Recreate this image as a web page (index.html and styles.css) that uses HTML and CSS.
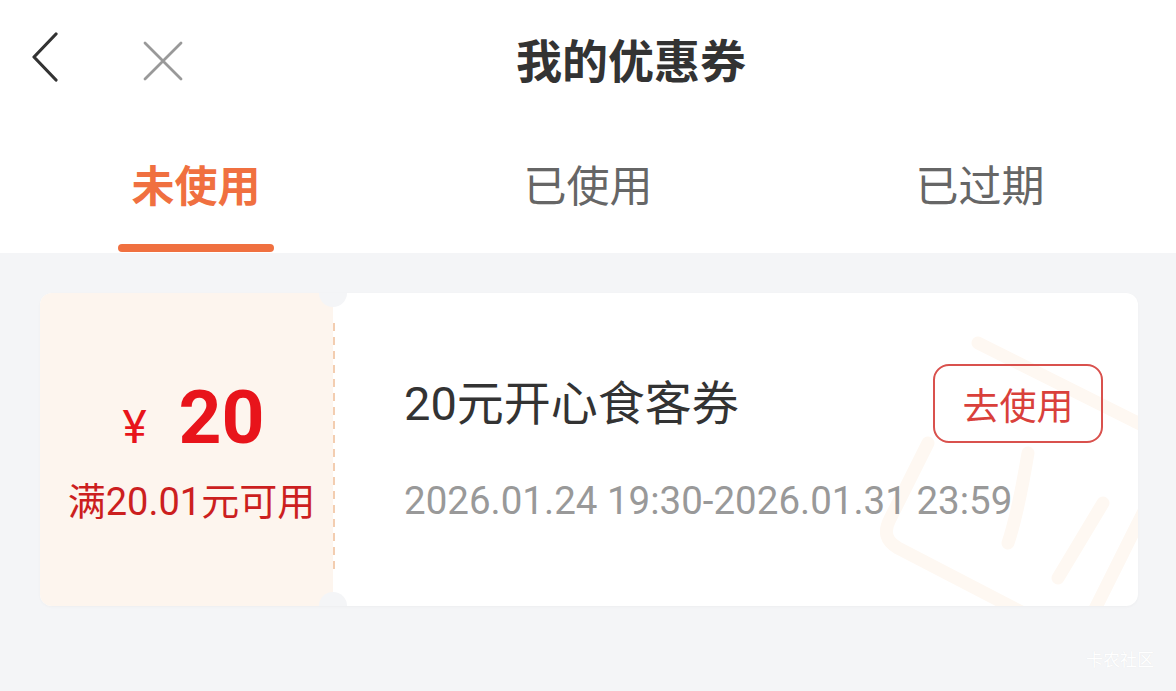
FILE: index.html
```html
<!doctype html>
<html lang="zh-CN">
<head>
<meta charset="utf-8">
<title>我的优惠券</title>
<link rel="stylesheet" href="styles.css">
</head>
<body>

<div class="topbar">
  <div class="topbar-left">
    <svg class="icon-back" width="40" height="60" viewBox="0 0 40 60">
      <path d="M24 3 L2 26 L24 49" fill="none" stroke="#333" stroke-width="3.2" stroke-linecap="round" stroke-linejoin="round"/>
    </svg>
    <svg class="icon-close" width="42" height="42" viewBox="0 0 42 42">
      <path d="M3 3 L39 39 M39 3 L3 39" fill="none" stroke="#999" stroke-width="2.8" stroke-linecap="round"/>
    </svg>
  </div>
  <div class="topbar-title">我的优惠券</div>
  <div></div>
</div>

<div class="tabs">
  <div class="tab active"><span class="tab-label">未使用</span><i class="tab-line"></i></div>
  <div class="tab"><span class="tab-label">已使用</span><i class="tab-line"></i></div>
  <div class="tab"><span class="tab-label">已过期</span><i class="tab-line"></i></div>
</div>

<div class="list">
  <div class="coupon">
    <div class="coupon-value">
      <div class="amount"><span class="yen">¥</span><span class="num">20</span></div>
      <div class="cond">满20.01元可用</div>
    </div>
    <div class="coupon-info">
      <svg class="stamp" width="300" height="320" viewBox="0 0 300 320">
        <g fill="none" stroke="#fef8f2" stroke-width="13" stroke-linecap="round" stroke-linejoin="round">
          <path d="M110 20 L290 110 Q310 120 300 140 L220 300 Q210 318 190 308 L30 225 Q12 215 22 196 L60 120"/>
          <path d="M160 130 Q150 190 140 220"/>
          <path d="M235 180 L190 255"/>
        </g>
      </svg>
      <div class="info-row">
        <div class="coupon-name">20元开心食客券</div>
        <button class="use-btn">去使用</button>
      </div>
      <div class="coupon-date">2026.01.24 19:30-2026.01.31 23:59</div>
    </div>
  </div>
</div>

<div class="watermark">卡农社区</div>

</body>
</html>
```

FILE: styles.css
```css
html, body {
  margin: 0;
  padding: 0;
}

body {
  width: 1176px;
  height: 691px;
  overflow: hidden;
  background-color: #f4f5f7;
  font-family: Roboto, "Noto Sans CJK SC", sans-serif;
  color: #333;
  position: relative;
}

/* top bar */
.topbar {
  height: 120px;
  background: #fff;
  display: grid;
  grid-template-columns: 1fr auto 1fr;
  align-items: center;
}
.topbar-left {
  display: flex;
  align-items: center;
  padding-left: 32px;
  padding-top: 2px;
}
.icon-back {
  display: block;
}
.icon-close {
  display: block;
  margin-left: 70px;
}
.topbar-title {
  font-family: "Noto Sans CJK SC", sans-serif;
  font-size: 46px;
  font-weight: 700;
  color: #333;
  line-height: 60px;
  padding-left: 86px;
  margin-top: -5px;
}

/* tabs */
.tabs {
  height: 133px;
  background: #fff;
  display: flex;
}
.tab {
  flex: 1;
  display: flex;
  flex-direction: column;
  align-items: center;
  padding-top: 33px;
  box-sizing: border-box;
}
.tab-label {
  font-family: "Noto Sans CJK SC", sans-serif;
  font-size: 43px;
  line-height: 60px;
  color: #666;
}
.tab-line {
  display: block;
  width: 156px;
  height: 8px;
  margin-top: 31px;
  border-radius: 4px;
}
.tab.active .tab-label {
  color: #f07040;
  font-weight: 700;
}
.tab.active .tab-line {
  background: #f07040;
}

/* coupon list */
.list {
  padding: 40px 38px 0 40px;
}
.coupon {
  height: 313px;
  display: flex;
  background: #fff;
  border-radius: 12px;
  overflow: hidden;
  box-shadow: 0 1px 3px rgba(0, 0, 0, 0.03);
}

.coupon-value {
  width: 293px;
  flex: none;
  position: relative;
  background: #fdf5ee;
  display: flex;
  flex-direction: column;
  align-items: center;
  padding-top: 84px;
  box-sizing: border-box;
}
.coupon-value::before,
.coupon-value::after {
  content: "";
  position: absolute;
  right: -14px;
  width: 28px;
  height: 28px;
  border-radius: 50%;
  background: #f4f5f7;
  z-index: 2;
}
.coupon-value::before {
  top: -14px;
}
.coupon-value::after {
  bottom: -14px;
}
.amount {
  display: flex;
  align-items: baseline;
  line-height: 80px;
  color: #e8141b;
  padding-left: 14px;
}
.yen {
  font-size: 46px;
  margin-right: 32px;
}
.num {
  font-size: 75px;
  font-weight: 700;
}
.cond {
  margin-top: 12px;
  padding-left: 10px;
  font-size: 38px;
  line-height: 46px;
  color: #cc1f1f;
}

.coupon-info {
  flex: 1;
  position: relative;
  padding: 71px 35px 0 71px;
  box-sizing: border-box;
  background-image: repeating-linear-gradient(to bottom, #f3cdb0 0, #f3cdb0 8px, transparent 8px, transparent 14px);
  background-size: 2px 252px;
  background-position: 0 30px;
  background-repeat: no-repeat;
}
.stamp {
  position: absolute;
  right: -30px;
  top: 30px;
}
.info-row {
  position: relative;
  display: flex;
  align-items: center;
  justify-content: space-between;
}
.coupon-name {
  font-size: 47px;
  line-height: 60px;
  color: #333;
  margin-top: 1px;
}
.use-btn {
  width: 170px;
  height: 79px;
  border: 2px solid #d9514d;
  border-radius: 16px;
  background: transparent;
  color: #d9403b;
  font-family: "Noto Sans CJK SC", sans-serif;
  font-size: 37px;
  padding: 0;
}
.coupon-date {
  position: relative;
  margin-top: 32px;
  font-size: 38.5px;
  line-height: 52px;
  color: #999;
}

.watermark {
  position: absolute;
  right: 22px;
  bottom: 20px;
  font-family: "Noto Sans CJK SC", sans-serif;
  font-size: 17px;
  color: #fff;
  text-shadow: 0 0 1px rgba(0, 0, 0, 0.08);
}
```
